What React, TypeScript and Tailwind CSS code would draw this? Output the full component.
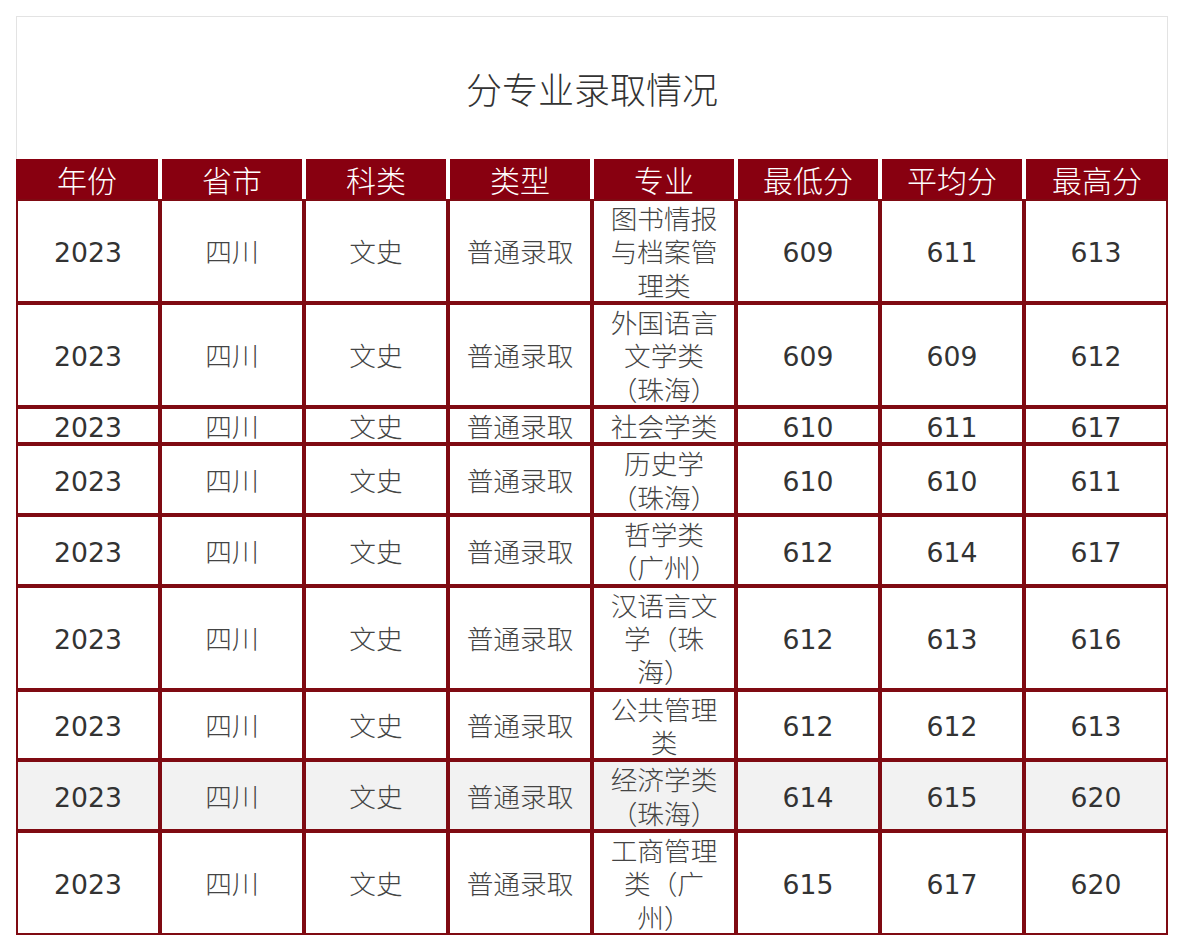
import React from 'react';

interface Row {
  major: string;
  min: number;
  avg: number;
  max: number;
  highlight?: boolean;
}

const headers = ['年份', '省市', '科类', '类型', '专业', '最低分', '平均分', '最高分'];

const rows: Row[] = [
  { major: '图书情报与档案管理类', min: 609, avg: 611, max: 613 },
  { major: '外国语言文学类（珠海）', min: 609, avg: 609, max: 612 },
  { major: '社会学类', min: 610, avg: 611, max: 617 },
  { major: '历史学（珠海）', min: 610, avg: 610, max: 611 },
  { major: '哲学类（广州）', min: 612, avg: 614, max: 617 },
  { major: '汉语言文学（珠海）', min: 612, avg: 613, max: 616 },
  { major: '公共管理类', min: 612, avg: 612, max: 613 },
  { major: '经济学类（珠海）', min: 614, avg: 615, max: 620, highlight: true },
  { major: '工商管理类（广州）', min: 615, avg: 617, max: 620 },
];

const cjk = "font-['Noto_Sans_CJK_SC',sans-serif] font-light text-[#444]";
const num = "font-['DejaVu_Sans','Noto_Sans_CJK_SC',sans-serif] text-[#333]";

const Cell: React.FC<{ font: string; shift?: boolean; children: React.ReactNode }> = ({ font, shift, children }) => (
  <div className={`flex items-center justify-center border-2 border-[#7f0a12] px-2 text-center ${font}`}>
    <div className={`w-full [text-spacing-trim:space-all] ${shift ? 'translate-y-[2px]' : ''}`}>{children}</div>
  </div>
);

const App: React.FC = () => {
  return (
    <div className="min-h-screen bg-white p-4">
      <div className="w-[1152px]">
        {/* Title */}
        <div className="flex h-[143px] items-center justify-center border border-b-0 border-[#e3e3e3]">
          <h2 className="font-['Noto_Sans_CJK_SC',sans-serif] text-[36px] font-light text-[#333]">分专业录取情况</h2>
        </div>

        {/* Header */}
        <div className="grid h-[40px] grid-cols-8">
          {headers.map((h) => (
            <div
              key={h}
              className="flex items-center justify-center border-x-2 border-white bg-[#880010] font-['Noto_Sans_CJK_SC',sans-serif] text-[30px] font-light leading-none text-white first:border-l-0 last:border-r-0"
            >
              {h}
            </div>
          ))}
        </div>

        {/* Body */}
        <div className="text-[26.67px] leading-[33.33px]">
          {rows.map((r) => (
            <div key={r.major} className={`grid grid-cols-8 ${r.highlight ? 'bg-[#f2f2f2]' : 'bg-white'}`}>
              <Cell font={num} shift>2023</Cell>
              <Cell font={cjk}>四川</Cell>
              <Cell font={cjk}>文史</Cell>
              <Cell font={cjk}>普通录取</Cell>
              <Cell font={cjk}>{r.major}</Cell>
              <Cell font={num} shift>{r.min}</Cell>
              <Cell font={num} shift>{r.avg}</Cell>
              <Cell font={num} shift>{r.max}</Cell>
            </div>
          ))}
        </div>
      </div>
    </div>
  );
};

export default App;
